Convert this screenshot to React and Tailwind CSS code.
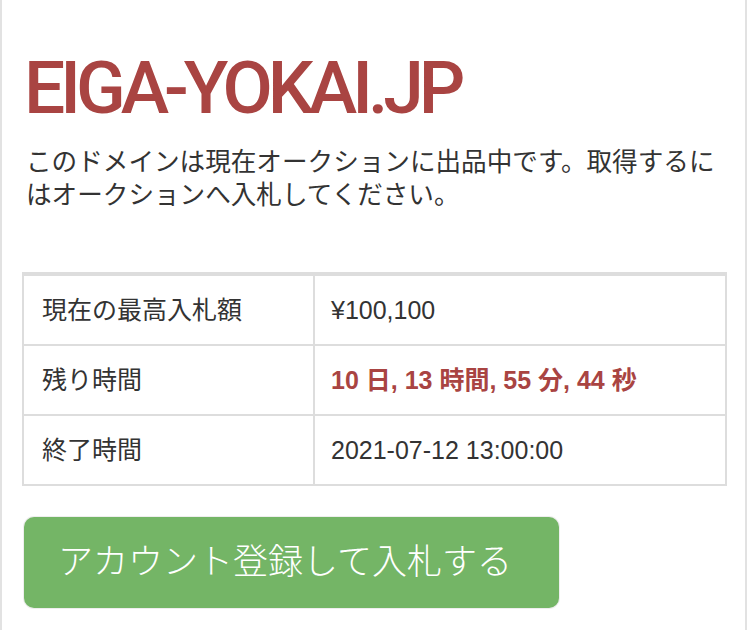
export default function App() {
  const rows = [
    { label: "現在の最高入札額", value: "¥100,100" },
    { label: "残り時間", value: "10 日, 13 時間, 55 分, 44 秒", danger: true },
    { label: "終了時間", value: "2021-07-12 13:00:00" },
  ];

  return (
    <div
      className="min-h-[630px] bg-white text-[#333]"
      style={{ fontFamily: '"Liberation Sans", "Noto Sans CJK JP", sans-serif' }}
    >
      <div className="w-[747px] min-h-[630px] border-x-2 border-[#e2e2e2] pl-[20px] pr-[18px] pt-[52px]">
        {/* Domain name */}
        <h1
          className="text-[73px] leading-none font-medium tracking-[-5px] text-[#a94442] pl-[2px]"
          style={{ fontFamily: 'Roboto, "Liberation Sans", sans-serif' }}
        >
          EIGA-YOKAI.JP
        </h1>

        <p className="mt-[21px] text-[25.6px] leading-[33px] pl-[4px]">
          このドメインは現在オークションに出品中です。取得するにはオークションへ入札してください。
        </p>

        {/* Auction table */}
        <table className="mt-[60px] w-full border-collapse text-[25px]">
          <tbody>
            {rows.map((row, i) => (
              <tr key={row.label}>
                <td
                  className={`w-[291px] border-2 border-[#dddddd] pl-[18px] py-[19px] leading-[30px] ${
                    i === 0 ? "border-t-[4px]" : ""
                  }`}
                >
                  {row.label}
                </td>
                <td
                  className={`border-2 border-[#dddddd] pl-[16px] py-[19px] leading-[30px] ${
                    i === 0 ? "border-t-[4px]" : ""
                  } ${row.danger ? "text-[#a94442] font-bold" : ""}`}
                >
                  {row.value}
                </td>
              </tr>
            ))}
          </tbody>
        </table>

        <button className="mt-[31px] ml-[2px] w-[535px] h-[91px] rounded-[10px] bg-[#74b566] text-white text-[35px] font-light pl-[34px] text-left ring-1 ring-[#eeeeee]">
          アカウント登録して入札する
        </button>
      </div>
    </div>
  );
}
